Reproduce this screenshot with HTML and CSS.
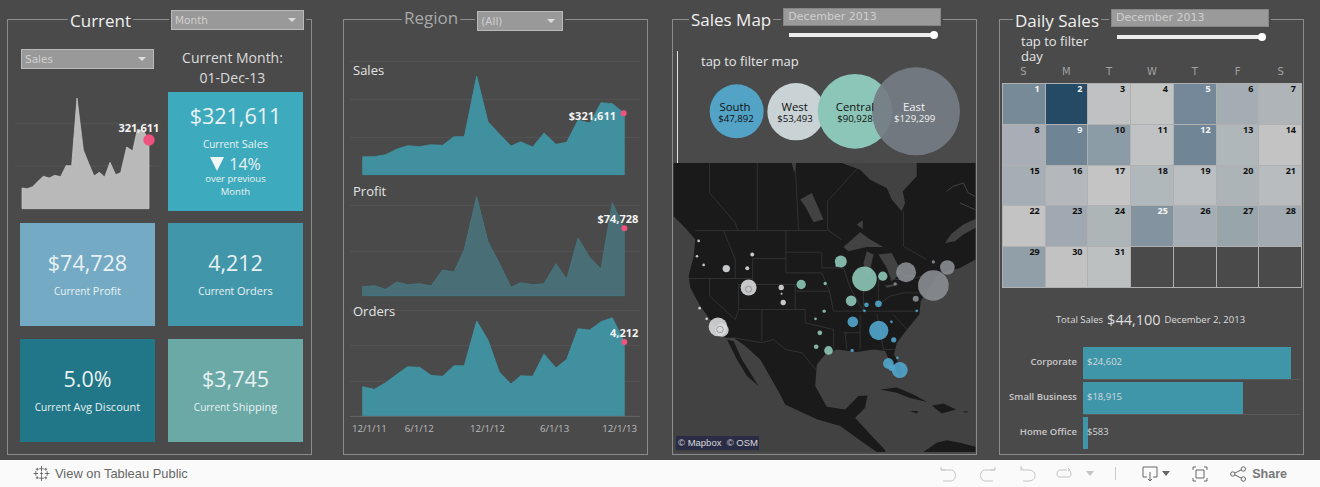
FILE: index.html
```html
<!DOCTYPE html>
<html lang="en">
<head>
<meta charset="utf-8">
<title>Sales Dashboard</title>
<link rel="stylesheet" href="styles.css">
</head>
<body>
<main class="dash">

  <section class="panel">
    <header class="head head-current">
      <h2 class="title">Current</h2>
      <div class="select select-month">Month<i class="caret"></i></div>
    </header>
    <div class="current-grid">
      <div class="spark-cell">
        <div class="select select-sales">Sales<i class="caret"></i></div>
        <svg class="spark" viewBox="45 210 450 420">
          <path class="grid" d="M45,370H483M45,498H483"/>
          <polygon class="spark-area" points="66,626 66,564 82,566 98,560 114,544 130,529 148,534 164,526 182,530 198,497 215,497 231,294 250,450 266,490 282,528 298,517 314,531 330,487 347,524 362,518 380,441 398,453 412,388 430,392 447,420 447,626"/>
          <circle class="dot" cx="447" cy="420" r="17"/>
          <text class="val-label" x="478" y="396" text-anchor="end">321,611</text>
        </svg>
      </div>
      <div class="month-cell">
        <div class="month-label">Current Month:<br>01-Dec-13</div>
        <div class="tile tile-sales">
          <div class="num">$321,611</div>
          <div class="cap"><span>Current</span> Sales</div>
          <div class="delta"><i class="down"></i>14%</div>
          <div class="sub">over previous<br>Month</div>
        </div>
      </div>
      <div class="tile tile-profit"><div class="num">$74,728</div><div class="cap"><span>Current</span> Profit</div></div>
      <div class="tile tile-orders"><div class="num">4,212</div><div class="cap"><span>Current</span> Orders</div></div>
      <div class="tile tile-discount"><div class="num">5.0%</div><div class="cap"><span>Current</span> Avg Discount</div></div>
      <div class="tile tile-shipping"><div class="num">$3,745</div><div class="cap"><span>Current</span> Shipping</div></div>
    </div>
  </section>

  <section class="panel panel-region">
    <header class="head head-region">
      <h2 class="title title-dim">Region</h2>
      <div class="select select-all">(All)<i class="caret"></i></div>
    </header>
    <div class="region-charts">
      <svg class="chart chart-a" viewBox="27 165 906 390">
        <path class="grid" d="M45,184H915M45,298H915M45,412H915"/>
        <polygon class="area" points="83,524 83,470 118,470 152,464 186,447 218,437 254,440 288,434 323,436 357,410 388,410 425,228 459,365 493,402 528,438 557,425 593,441 627,399 663,433 695,427 729,360 764,369 798,308 832,311 868,340 868,524"/>
        <circle class="dot" cx="866" cy="340" r="9"/>
        <text class="chart-name" x="54" y="224">Sales</text>
        <text class="val-label" x="843" y="360" text-anchor="end">$321,611</text>
      </svg>
      <svg class="chart chart-b" viewBox="27 555 906 360">
        <path class="grid" d="M45,616H915M45,754H915"/>
        <polygon class="area area-dim" points="83,887 83,860 118,857 152,868 186,846 218,854 254,851 288,858 323,810 357,816 388,748 425,590 459,725 493,790 528,862 557,848 593,854 627,851 663,791 695,838 729,714 764,772 798,807 832,608 868,685 868,887"/>
        <circle class="dot" cx="868" cy="685" r="9"/>
        <text class="chart-name" x="54" y="587">Profit</text>
        <text class="val-label" x="910" y="668" text-anchor="end">$74,728</text>
      </svg>
      <svg class="chart chart-c" viewBox="27 915 906 390">
        <path class="grid" d="M45,931H915M45,1036H915M45,1144H915"/>
        <polygon class="area" points="83,1247 83,1160 118,1168 152,1148 186,1123 218,1100 254,1102 288,1126 323,1129 357,1097 388,1097 425,963 459,1020 493,1116 528,1152 557,1127 593,1129 627,1062 663,1104 695,1078 729,986 764,990 798,965 832,953 868,1026 868,1247"/>
        <path class="axis" d="M45,1249H915"/>
        <circle class="dot" cx="868" cy="1026" r="9"/>
        <text class="chart-name" x="54" y="949">Orders</text>
        <text class="val-label" x="910" y="1010" text-anchor="end">4,212</text>
        <text class="tick" x="51" y="1296">12/1/11</text>
        <text class="tick" x="209" y="1296">6/1/12</text>
        <text class="tick" x="405" y="1296">12/1/12</text>
        <text class="tick" x="615" y="1296">6/1/13</text>
        <text class="tick" x="802" y="1296">12/1/13</text>
      </svg>
    </div>
  </section>

  <section class="panel panel-map">
    <header class="head head-map">
      <h2 class="title">Sales Map</h2>
      <div class="date-col">
        <div class="date-box">December 2013</div>
        <div class="slider"><i class="thumb"></i></div>
      </div>
    </header>
    <div class="legend">
      <p class="tap tap-map">tap to filter map</p>
      <svg class="bubbles" viewBox="39 198 891 279">
        <circle class="b-south" cx="215" cy="334" r="81"/>
        <circle class="b-west" cx="393" cy="335" r="86"/>
        <circle class="b-central" cx="570" cy="334" r="112"/>
        <circle class="b-east" cx="753" cy="334" r="132"/>
        <text class="b-name" x="210" y="332">South</text><text class="b-val" x="213" y="365">$47,892</text>
        <text class="b-name" x="389" y="332">West</text><text class="b-val" x="390" y="365">$53,493</text>
        <text class="b-name" x="570" y="332">Central</text><text class="b-val" x="570" y="365">$90,928</text>
        <text class="b-name light" x="747" y="332">East</text><text class="b-val light" x="749" y="365">$129,299</text>
      </svg>
    </div>
    <div class="map">
      <svg class="map-svg" viewBox="10 10 906 868">
        <rect class="water" x="10" y="10" width="906" height="868"/>
        <path class="land" d="M10,10H515L570,30L600,60L650,85L665,120L695,155L705,130L698,95L740,50V10H916V178L880,195L845,222L825,250L855,245L880,225L916,205V300L870,325L835,335L800,350L770,395L752,425L748,465L715,505L680,550L672,585L700,640L690,655L665,620L645,575L610,570L560,578L500,570L465,585L440,615L435,680L470,742L525,750L565,710L592,708L585,745L555,775L600,825L645,872V878H620L580,850L510,800L440,780L345,735L330,705L270,600L225,560L190,535L165,535L130,495L90,440L60,385L55,350L70,290L75,240L45,205L10,170Z"/>
        <path class="land" d="M170,540L190,545L215,600L265,680L230,650L200,600Z"/>
        <path class="land" d="M630,690L680,684L730,705L772,728L720,716L680,700ZM786,738L820,732L858,750L815,762L800,750ZM720,755L745,755L740,762ZM875,756H895L890,760ZM760,878L800,850L830,843L870,850L916,862V878Z"/>
        <path class="water" d="M520,262L570,218L600,240L640,262L590,262L535,275ZM590,275L610,285L600,330L590,345L580,310ZM625,285L665,280L695,340L665,365L650,325ZM645,378L685,372L680,378L650,385ZM695,345L730,345L735,352L705,358ZM390,120L425,100L460,180L430,188L405,140ZM560,195L578,182L578,208ZM365,10H378L372,40Z"/>
        <path class="inlet" d="M830,95L850,80L880,70L895,100L915,110M870,130L915,150"/>
        <path class="border" d="M118,10V100L195,190L203,213M261,10V213M375,10L385,213M565,22L472,125V205L480,215M75,213H475L515,240M160,213L175,250L195,300V357M247,297V375H205V450M55,357H247M118,357V410L195,480L205,450H275V545M205,375H375V450M347,213V340M347,278H455M347,340H455L478,395L490,455M375,395H478M275,450H405V490L490,510V565M455,280V325H520M520,325L540,385L580,455M490,455H745M580,380V455M625,360V435L660,410L700,400L770,400M520,520H570M525,520L530,570M570,465V570M620,462L640,570H680M670,465L710,510M190,535L275,550L310,540L345,570L395,580L440,635M247,297H345M660,360H720L770,345M700,155V260L770,300"/>
        <g class="pts-green">
          <circle cx="512" cy="306" r="18"/><circle cx="583" cy="358" r="37"/><circle cx="638" cy="350" r="14"/><circle cx="543" cy="424" r="16"/><circle cx="393" cy="375" r="14"/><circle cx="475" cy="573" r="13"/><circle cx="449" cy="520" r="7"/><circle cx="438" cy="562" r="7"/><circle cx="462" cy="455" r="5"/><circle cx="436" cy="478" r="4"/><circle cx="465" cy="372" r="5"/><circle cx="500" cy="318" r="4"/>
        </g>
        <g class="pts-east">
          <circle cx="708" cy="338" r="30"/><circle cx="790" cy="378" r="46"/><circle cx="832" cy="324" r="22"/><circle cx="737" cy="418" r="9"/><circle cx="790" cy="307" r="5"/><circle cx="675" cy="373" r="5"/>
        </g>
        <g class="pts-blue">
          <circle cx="626" cy="513" r="29"/><circle cx="548" cy="487" r="16"/><circle cx="689" cy="632" r="24"/><circle cx="655" cy="612" r="16"/><circle cx="665" cy="625" r="10"/><circle cx="625" cy="433" r="10"/><circle cx="589" cy="436" r="7"/><circle cx="671" cy="541" r="8"/><circle cx="546" cy="573" r="5"/><circle cx="682" cy="595" r="4"/><circle cx="664" cy="487" r="4"/><circle cx="583" cy="454" r="4"/><circle cx="740" cy="454" r="4"/>
        </g>
        <g class="pts-west">
          <circle cx="235" cy="384" r="24"/><circle cx="143" cy="502" r="28"/><circle cx="155" cy="512" r="20"/><circle cx="168" cy="327" r="11"/><circle cx="333" cy="384" r="8"/><circle cx="339" cy="429" r="8"/><circle cx="246" cy="285" r="6"/><circle cx="231" cy="326" r="6"/><circle cx="100" cy="316" r="4"/><circle cx="80" cy="290" r="4"/><circle cx="85" cy="244" r="4"/><circle cx="88" cy="446" r="4"/><circle cx="109" cy="478" r="4"/><circle cx="334" cy="403" r="3"/>
        </g>
        <path class="rings" d="M226,389a9,9 0 1,0 18,0a9,9 0 1,0 -18,0M139,510a10,10 0 1,0 20,0a10,10 0 1,0 -20,0"/>
      </svg>
      <div class="attrib">© Mapbox&nbsp; © OSM</div>
    </div>
  </section>

  <section class="panel panel-daily">
    <header class="head head-daily">
      <div class="title-col">
        <h2 class="title">Daily Sales</h2>
        <p class="tap tap-day">tap to filter<br>day</p>
      </div>
      <div class="date-col">
        <div class="date-box">December 2013</div>
        <div class="slider"><i class="thumb"></i></div>
      </div>
    </header>
    <div class="weekdays"><span>S</span><span>M</span><span>T</span><span>W</span><span>T</span><span>F</span><span>S</span></div>
    <div class="calendar">
      <div class="day inv c01">1</div><div class="day inv c02">2</div><div class="day c03">3</div><div class="day c04">4</div><div class="day inv c05">5</div><div class="day c06">6</div><div class="day c07">7</div>
      <div class="day c08">8</div><div class="day inv c09">9</div><div class="day c10">10</div><div class="day c11">11</div><div class="day inv c12">12</div><div class="day c13">13</div><div class="day c14">14</div>
      <div class="day c15">15</div><div class="day c16">16</div><div class="day c17">17</div><div class="day c18">18</div><div class="day c19">19</div><div class="day c20">20</div><div class="day c21">21</div>
      <div class="day c22">22</div><div class="day c23">23</div><div class="day c24">24</div><div class="day inv c25">25</div><div class="day c26">26</div><div class="day c27">27</div><div class="day c28">28</div>
      <div class="day c29">29</div><div class="day c30">30</div><div class="day c31">31</div><div class="day blank"></div><div class="day blank"></div><div class="day blank"></div><div class="day blank"></div>
    </div>
    <div class="total"><span>Total Sales</span><strong>$44,100</strong><span>December 2, 2013</span></div>
    <div class="bars">
      <div class="bar-row"><span class="bar-name">Corporate</span><div class="bar-track"><div class="bar" style="width:208px"></div><span class="bar-val">$24,602</span></div></div>
      <div class="bar-row"><span class="bar-name">Small Business</span><div class="bar-track"><div class="bar" style="width:160px"></div><span class="bar-val">$18,915</span></div></div>
      <div class="bar-row"><span class="bar-name">Home Office</span><div class="bar-track"><div class="bar" style="width:5px"></div><span class="bar-val">$583</span></div></div>
    </div>
  </section>
</main>

<footer class="toolbar">
  <svg class="tb-logo" viewBox="0 0 18 18"><path d="M9,1V7M6.500,4H11.500M9,11V17M6.500,14H11.500M3,6.500V11.500M.5,9H5.500M15,6.500V11.500M12.500,9H17.500M4.500,3V6M3,4.500H6M13.500,3V6M12,4.500H15M4.500,12V15M3,13.500H6M13.500,12V15M12,13.500H15M9,7.500V10.500M7.500,9H10.500"/></svg>
  <span class="tb-view">View on Tableau Public</span>
  <div class="tb-right">
    <svg class="ic off" viewBox="0 0 16 16"><path d="M1,1V4H5M1.500,4H11C13.500,4 15.500,6.500 15.500,9.500C15.500,12.500 13.500,15 11,15H3"/></svg>
    <svg class="ic off" viewBox="0 0 16 16"><path d="M15,1V4H11M14.500,4H5C2.500,4 .5,6.500 .5,9.500C.5,12.500 2.500,15 5,15H13"/></svg>
    <svg class="ic off" viewBox="0 0 16 16"><path d="M1,0V5M1.500,2L3,4H9C12,4 15,6 15,9.500C15,13 12,15 9,15H3"/></svg>
    <svg class="ic off" viewBox="0 0 16 16"><path d="M11,4H4C2,4 1,6 1,8C1,10 2,11 4,11H12C14,11 15,10 15,8C15,6 14,4 12,4M12,2L14,4L12,5"/></svg>
    <i class="tb-caret off-caret"></i>
    <i class="tb-sep"></i>
    <svg class="ic on ic-down" viewBox="0 0 16 16"><path d="M5,11H1V1H15V11H11M8,6V14M6,13L8,15L10,13"/></svg>
    <i class="tb-caret"></i>
    <svg class="ic on ic-full" viewBox="0 0 16 16"><path d="M1,4V1H4M12,1H15V4M15,12V15H12M4,15H1V12M4,4H12V12H4Z"/></svg>
    <svg class="ic on ic-share" viewBox="0 0 16 16"><path d="M5,7L11,4M5,9L11,12M5,8a2.200,2.200 0 1,1 -4.400,0a2.200,2.200 0 1,1 4.400,0M15.500,3a2.200,2.200 0 1,1 -4.400,0a2.200,2.200 0 1,1 4.400,0M15.500,13a2.200,2.200 0 1,1 -4.400,0a2.200,2.200 0 1,1 4.400,0"/></svg>
    <span class="tb-share">Share</span>
  </div>
</footer>
</body>
</html>
```
FILE: styles.css
```css
* { box-sizing: border-box; }
html, body { margin: 0; padding: 0; }
body { width: 1320px; height: 487px; overflow: hidden; background: #4a4a4a; font-family: "Open Sans", "DejaVu Sans", sans-serif; color: #e6e6e6; }

.dash { display: flex; height: 460px; padding: 19px 0 0 7px; }
.panel { width: 305px; height: 436px; border: 1px solid #8c8c8c; }
.panel-region { margin-left: 31px; }
.panel-map { margin-left: 24px; }
.panel-daily { margin-left: 22px; }

.head { display: flex; align-items: flex-start; }
.head-current { margin-top: -10px; height: 20px; padding-left: 60px; }
.head-region { margin-top: -10px; height: 20px; padding-left: 58px; }
.head-map { margin-top: -12px; padding-left: 16px; }
.head-daily { margin-top: -11px; padding-left: 13px; }

.title { margin: -1px 0 0; padding: 0 2px; background: #4a4a4a; font-size: 17px; line-height: 24px; font-weight: 400; color: #f0f0f0; white-space: nowrap; }
.head-map .title, .head-daily .title { margin-top: 0; }
.title-dim { color: #a8a8a8; margin-top: -4px; }

.select { display: flex; align-items: center; justify-content: space-between; height: 20px; padding: 0 5px 0 3px; background: #999; border: 1px solid #b9b9b9; color: #cfcfcf; font-family: "DejaVu Sans", sans-serif; font-size: 10.5px; outline: 2px solid #4a4a4a; }
.caret { width: 0; height: 0; border: 4px solid transparent; border-top: 4px solid #ddd; border-bottom: 0; margin-right: 2px; }
.select-month { width: 133px; margin-left: 38px; }
.select-all { width: 86px; margin: 1px 0 0 17px; }
.select-sales { width: 133px; margin-left: 1px; outline: 0; }

.current-grid { display: grid; grid-template-columns: 135px 135px; grid-template-rows: 162px 103px 104px; column-gap: 13px; row-gap: 12px; padding: 19px 0 0 12px; }
.tile-discount, .tile-shipping { margin-top: 1px; }
.spark-cell { display: flex; flex-direction: column; }
.spark { width: 150px; height: 140px; margin: 1px 0 0 -5px; overflow: visible; flex: none; }
.spark-cell .select { flex: none; }
.grid { stroke: #5b5b5b; stroke-width: 2; fill: none; }
.spark-area { fill: #b9b9b9; stroke: #d0d0d0; stroke-width: 2; }
.dot { fill: #f0527e; }
.val-label { font-family: "Open Sans", sans-serif; font-weight: 700; font-size: 33px; fill: #f4f4f4; }

.month-cell { display: flex; flex-direction: column; }
.month-label { height: 43px; margin: -1px 0 1px; padding-right: 6px; text-align: center; font-size: 14px; line-height: 20px; color: #dcdcdc; flex: none; }
.tile { display: flex; flex-direction: column; align-items: center; color: #e9f2f3; padding-top: 26px; }
.tile-sales { height: 119px; background: #3eaabd; padding-top: 10px; }
.tile-profit { background: #74aac4; }
.tile-orders { background: #4296aa; }
.tile-discount { background: #217687; }
.tile-shipping { background: #6aa9a6; }
.num { font-size: 21.500px; line-height: 28px; }
.cap { font-size: 11px; line-height: 16px; margin-top: 6px; }
.cap span { font-size: 10px; }
.delta { display: flex; align-items: center; gap: 5px; font-size: 16px; line-height: 20px; }
.tile-sales .cap { margin-top: 5px; line-height: 17px; }
.tile-sales .delta { margin-top: 1px; }
.down { width: 0; height: 0; border-left: 7px solid transparent; border-right: 7px solid transparent; border-top: 14px solid #f0f5f6; }
.sub { margin-top: -2px; font-size: 9.500px; line-height: 13px; text-align: center; }

.region-charts { display: flex; flex-direction: column; padding-top: 25px; }
.chart { display: block; width: 302px; flex: none; overflow: visible; }
.chart-a { height: 130px; }
.chart-b { height: 120px; }
.chart-c { height: 130px; }
.area { fill: #41909f; stroke: #3d9bac; stroke-width: 2; }
.area-dim { fill: #4a6e76; stroke: #41808c; }
.axis { stroke: #777; stroke-width: 2; }
.chart-name { font-family: "Open Sans", sans-serif; font-size: 39px; fill: #e4e4e4; }
.tick { font-family: "Open Sans", sans-serif; font-size: 29px; fill: #bcbcbc; }

.date-col { display: flex; flex-direction: column; margin-left: 10px; }
.date-box { width: 158px; height: 18px; padding-left: 4px; background: #9a9a9a; border: 1px solid #858585; color: #cfcfcf; font-family: "DejaVu Sans", sans-serif; font-size: 11px; line-height: 15px; outline: 2px solid #4a4a4a; }
.slider { position: relative; width: 145px; height: 4px; margin: 7px 0 0 6px; background: #ececec; }
.head-daily .slider { margin-top: 8px; }
.thumb { position: absolute; right: -4px; top: -2px; width: 8px; height: 8px; border-radius: 50%; background: #fff; }

.legend { width: 299px; height: 112px; margin: 14px 0 0 4px; border-left: 1px solid #e0e0e0; }
.tap { margin: 0; font-size: 13px; line-height: 15px; color: #e6e6e6; }
.tap-map { padding: 3px 0 0 23px; height: 15px; white-space: nowrap; }
.bubbles { display: block; width: 297px; height: 93px; }
.b-south { fill: #52a3c6; }
.b-west { fill: #c9d2d5; }
.b-central { fill: #8cc6b8; }
.b-east { fill: #747c84; fill-opacity: .93; }
.b-name, .b-val { font-family: "Open Sans", sans-serif; text-anchor: middle; fill: #111; }
.b-name { font-size: 34px; }
.b-val { font-size: 29px; }
.light { fill: #f0f0f0; }

.map { position: relative; height: 289px; width: 303px; }
.map-svg { display: block; width: 303px; height: 289px; }
.water { fill: #424242; }
.land { fill: #1a1a1a; }
.inlet { fill: none; stroke: #424242; stroke-width: 3; }
.border { fill: none; stroke: #3c3c3c; stroke-width: 2; }
.pts-green circle { fill: #8cc6b8; fill-opacity: .9; }
.pts-east circle { fill: #8a8d92; fill-opacity: .9; }
.pts-blue circle { fill: #52a6cc; fill-opacity: .9; }
.pts-west circle { fill: #d8dadb; fill-opacity: .9; }
.rings { fill: none; stroke: #666; stroke-width: 1.500; }
.attrib { position: absolute; left: 3px; bottom: 2px; width: 83px; height: 14px; background: #2a2c45; color: #d8d8d8; font-family: "Liberation Sans", sans-serif; font-size: 9.500px; line-height: 14px; padding-left: 2px; white-space: nowrap; }

.title-col { width: 98px; flex: none; }
.title-col .title { width: fit-content; }
.tap-day { margin: 1px 0 0 8px; }
.head-daily .date-col { margin-left: 0; }
.weekdays { display: grid; grid-template-columns: repeat(7, 1fr); width: 300px; margin: 1px 0 0 2px; height: 18px; text-align: center; font-family: "DejaVu Sans", sans-serif; font-size: 10px; line-height: 14px; color: #a2a2a2; }
.calendar { display: grid; grid-template-columns: repeat(7, 1fr); grid-auto-rows: 1fr; gap: 1px; width: 300px; height: 205px; margin-left: 2px; padding: 1px; background: #b0b0b0; }
.day { padding: 0 5px 0 0; text-align: right; font-family: "Open Sans", sans-serif; font-weight: 700; font-size: 9px; line-height: 9px; color: #111; }
.inv { color: #f4f4f4; }
.c01 { background: #768a98; } .c02 { background: #244a66; } .c03 { background: #bfc1c3; } .c04 { background: #c3c5c4; } .c05 { background: #748899; } .c06 { background: #a4adb4; } .c07 { background: #afb4b8; }
.c08 { background: #a9aeb6; } .c09 { background: #6f8596; } .c10 { background: #8c9ca6; } .c11 { background: #c1c2c4; } .c12 { background: #708595; } .c13 { background: #b0b7ba; } .c14 { background: #c3c3c3; }
.c15 { background: #a5aeb4; } .c16 { background: #b4b8bc; } .c17 { background: #c4c4c5; } .c18 { background: #b1b8bb; } .c19 { background: #bbbfc1; } .c20 { background: #adb4b7; } .c21 { background: #b8bcbe; }
.c22 { background: #c3c3c4; } .c23 { background: #a0a9b2; } .c24 { background: #adb5b6; } .c25 { background: #83939f; } .c26 { background: #a6aeb5; } .c27 { background: #98a5ab; } .c28 { background: #a2aab2; }
.c29 { background: #919fa9; } .c30 { background: #c2c2c3; } .c31 { background: #bcc0c1; } .blank { background: #4a4a4a; }

.total { display: flex; align-items: center; justify-content: center; gap: 4px; height: 24px; margin: 19px 0 16px 0; padding-right: 2px; font-size: 9.500px; color: #dedede; }
.total strong { font-weight: 400; font-size: 14.500px; }
.bars { display: flex; flex-direction: column; gap: 3px; }
.bar-row { display: flex; align-items: stretch; height: 32px; }
.bar-name { width: 77px; flex: none; padding-top: 8px; text-align: right; font-size: 9.500px; line-height: 14px; font-weight: 600; color: #c8c8c8; white-space: nowrap; }
.bar-track { position: relative; flex: 1; margin: 0 2px 0 6px; box-shadow: 0 2px 0 -1px #5a5a5a; }
.bar { height: 32px; background: #4096a9; }
.bar-val { position: absolute; left: 4px; top: 8px; font-size: 9.500px; line-height: 14px; color: #d0d8da; }
.bar-row:last-child .bar-track { box-shadow: none; }

.toolbar { display: flex; align-items: center; height: 27px; padding-left: 33px; background: #fafafa; color: #666; font-family: "Liberation Sans", sans-serif; }
.tb-logo { width: 17px; height: 17px; fill: none; stroke: #666; stroke-width: 1; }
.tb-view { margin-left: 5px; font-size: 12.900px; }
.tb-right { display: flex; align-items: center; margin-left: auto; padding-right: 33px; }
.ic { width: 16px; height: 16px; fill: none; stroke-width: 1; }
.off { stroke: #c4c4c4; margin-right: 24px; }
.off:nth-child(3) { margin-right: 20px; }
.off:nth-child(4) { margin-right: 14px; }
.on { stroke: #666; }
.tb-caret { width: 0; height: 0; border-left: 4px solid transparent; border-right: 4px solid transparent; border-top: 5px solid #666; margin-left: 4px; }
.off-caret { border-top-color: #c4c4c4; margin-left: 0; }
.tb-sep { width: 1px; height: 13px; margin: 0 26px 0 21px; background: #ccc; }
.ic-full { margin-left: 22px; }
.ic-share { margin-left: 22px; }
.tb-share { margin-left: 6px; font-size: 12.500px; font-weight: 700; color: #777; }
```
